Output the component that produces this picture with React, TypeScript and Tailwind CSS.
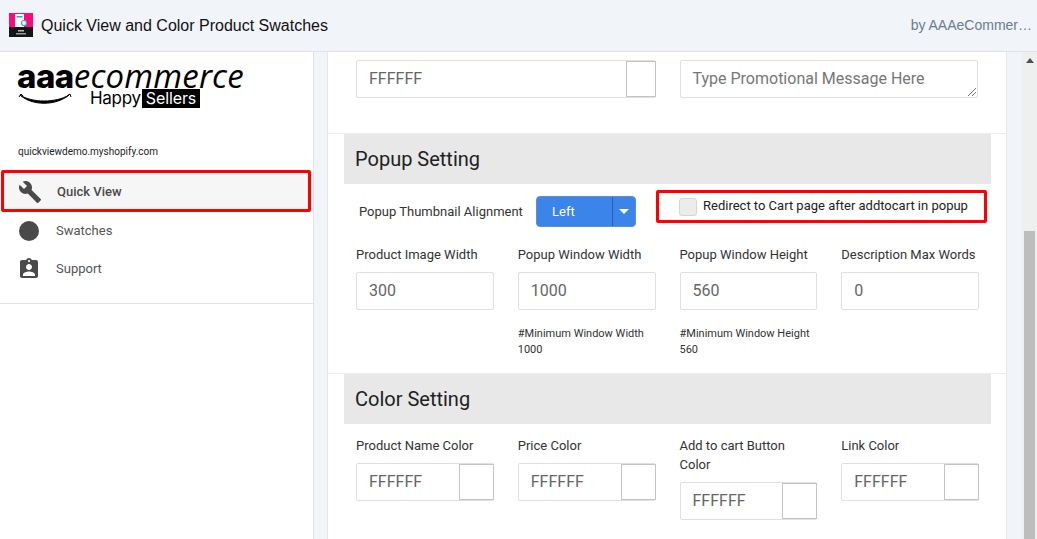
import React from "react";

const roboto = "font-['Roboto',sans-serif]";

function Wrench() {
  return (
    <svg width="24" height="24" viewBox="0 0 24 24" className="fill-[#4a4a4a]">
      <path d="M22.7 19l-9.1-9.1c.9-2.3.4-5-1.5-6.9-2-2-5-2.4-7.4-1.3L9 6 6 9 1.6 4.700C.4 7.100.9 10.100 2.900 12.100c1.900 1.900 4.600 2.400 6.900 1.500l9.100 9.100c.4.400 1 .4 1.400 0l2.300-2.300c.5-.4.5-1.100.1-1.400z" />
    </svg>
  );
}

function Badge() {
  return (
    <svg width="24" height="24" viewBox="0 0 24 24" className="fill-[#4a4a4a]">
      <path d="M19 3h-4.180C14.400 1.840 13.300 1 12 1s-2.400.84-2.820 2H5c-1.100 0-2 .9-2 2v14c0 1.100.9 2 2 2h14c1.100 0 2-.9 2-2V5c0-1.100-.9-2-2-2zm-7 0c.55 0 1 .45 1 1s-.45 1-1 1-1-.45-1-1 .45-1 1-1zm0 4c1.660 0 3 1.340 3 3s-1.340 3-3 3-3-1.340-3-3 1.340-3 3-3zm6 12H6v-1.400c0-2 4-3.100 6-3.100s6 1.100 6 3.100V19z" />
    </svg>
  );
}

function Field({ value }: { value: string }) {
  return (
    <div className="h-[38px] border border-[#e0e0e0] rounded-[2px] bg-white pl-3 flex items-center text-[16px] text-[#666]">
      {value}
    </div>
  );
}

function ColorField({ value = "FFFFFF", wide }: { value?: string; wide?: boolean }) {
  return (
    <div className={`h-[38px] border border-[#e0e0e0] rounded-[2px] bg-white pl-3 flex items-center text-[16px] text-[#666] ${wide ? "w-[300px]" : ""}`}>
      <span className="flex-1">{value}</span>
      <span className={`h-[36px] -mr-px border border-[#c4c4c4] bg-white ${wide ? "w-[30px]" : "w-[35px]"}`} />
    </div>
  );
}

function SectionHead({ title }: { title: string }) {
  return (
    <div className="h-[50px] ml-4 mr-[15px] bg-[#e8e8e8] flex items-center pl-[11px] text-[20px] text-[#212121]">
      {title}
    </div>
  );
}

function Label({ children, className = "" }: { children: React.ReactNode; className?: string }) {
  return <div className={`text-[13px] leading-[19px] text-[#333] ${className}`}>{children}</div>;
}

export default function App() {
  return (
    <div className={`h-[539px] w-[1037px] overflow-hidden bg-[#f1f4f8] flex flex-col ${roboto}`}>
      <header className="h-[52px] shrink-0 bg-[#f1f4f8] border-b border-[#dfe3e8] flex items-center pl-[9px] pr-[5px]">
        <svg width="24" height="24" viewBox="0 0 24 24" className="shrink-0 mb-[2px]">
          <rect width="24" height="24" fill="#ff0a78" />
          <rect y="14" width="24" height="10" fill="#141414" />
          <rect x="6" y="1" width="9" height="13" fill="#fff" />
          <rect x="7.500" y="3" width="6" height="1.500" fill="#27a9e1" />
          <circle cx="15" cy="10" r="2.500" fill="#fff" stroke="#27a9e1" strokeWidth="1.200" />
          <rect x="9" y="17" width="6" height="1.500" fill="#bbb" />
          <rect x="7" y="20" width="10" height="1.500" fill="#999" />
        </svg>
        <span className="ml-[8px] text-[16px] text-[#111] font-['Liberation_Sans',sans-serif] flex-1">Quick View and Color Product Swatches</span>
        <span className="text-[14px] text-[#6b7c93] font-['Liberation_Sans',sans-serif]">by AAAeCommer…</span>
      </header>

      <div className="flex flex-1 min-h-0">
        <aside className="w-[314px] shrink-0 bg-white border-r border-[#dfe3e8] h-full">
          <div className="h-[252px] border-b border-[#e3e3e3]">
            <div className="pl-[17px] pt-[10px] h-[73px]">
              <div className="flex items-baseline leading-[27px] text-black font-['Inter',sans-serif] h-[27px]">
                <span className="text-[33px] font-extrabold tracking-[-0.5px]">aaa</span>
                <span className="text-[33px] italic font-['Open_Sans',sans-serif] tracking-[0.2px]">ecommerce</span>
              </div>
              <div className="flex items-start h-[19px]">
                <svg width="54" height="12" viewBox="0 0 54 12" className="ml-[1px] mt-[4px]">
                  <path d="M2 2 C 14 10, 38 10, 51 2 C 38 13, 14 13, 2 2Z" fill="#000" stroke="#000" strokeWidth="1" />
                  <path d="M1 4 L3 1 L5 3 M49 3 L52 1 L53 4" fill="none" stroke="#000" strokeWidth="1" />
                </svg>
                <span className="ml-[18px] text-[17px] leading-[19px] text-black font-['Inter',sans-serif] tracking-[-0.3px]">Happy</span>
                <span className="ml-[1px] bg-black text-white text-[16px] leading-[19px] px-[4px] font-['Inter',sans-serif] tracking-[-0.1px]">Sellers</span>
              </div>
            </div>
            <div className="pl-[18px] pt-[20px] text-[10px] leading-[13px] text-[#222]">quickviewdemo.myshopify.com</div>
            <nav className="mt-[12px] text-[13px] text-[#555]">
              <div className="ml-[1px] w-[310px] h-[42px] pt-[2px] border-[3px] border-[#f00] rounded-[2px] bg-[#f6f6f6] flex items-center pl-[14px] font-medium text-[#4a4a4a]">
                <Wrench />
                <span className="ml-[15px]">Quick View</span>
              </div>
              <div className="h-[38px] flex items-center pl-[19px]">
                <span className="w-[20px] h-[20px] rounded-full bg-[#4a4a4a]" />
                <span className="ml-[17px]">Swatches</span>
              </div>
              <div className="h-[38px] flex items-center pl-[17px]">
                <Badge />
                <span className="ml-[15px]">Support</span>
              </div>
            </nav>
          </div>
        </aside>

        <main className="w-[680px] ml-[13px] shrink-0 bg-white border-l border-r border-[#e6e8eb] h-full overflow-hidden">
          <div className="h-[82px] border-b border-[#ececec] px-[28px] pt-[8px] flex gap-[24px]">
            <ColorField wide />
            <div className="w-[299px] h-[38px] border border-[#e0e0e0] rounded-[2px] pl-3 flex items-center text-[16px] text-[#777] relative">
              Type Promotional Message Here
              <svg width="8" height="8" viewBox="0 0 8 8" className="absolute right-[1px] bottom-[1px]">
                <path d="M0 8 L8 0 M4 8 L8 4" stroke="#777" strokeWidth="1" />
              </svg>
            </div>
          </div>

          <section className="h-[240px] border-b border-[#ececec]">
            <SectionHead title="Popup Setting" />
            <div className="h-[88px] relative">
              <div className="flex items-center pl-[31px] pt-[12px]">
                <span className="text-[13px] text-[#333] w-[177px]">Popup Thumbnail Alignment</span>
                <div className="w-[100px] h-[31px] rounded-[4px] bg-[#3a84ea] text-white text-[13px] flex border border-[#5f8fd0]">
                  <span className="w-[75px] flex items-center pl-[15px]">Left</span>
                  <span className="flex-1 border-l border-[#2b5fa8] flex items-center justify-center">
                    <span className="w-0 h-0 border-l-[5px] border-r-[5px] border-t-[5px] border-l-transparent border-r-transparent border-t-white" />
                  </span>
                </div>
              </div>
              <div className="absolute left-[328px] top-[6px] w-[331px] h-[33px] border-[3px] border-[#f00] rounded-[2px] flex items-center pl-[20px]">
                <span className="w-[18px] h-[18px] bg-[#ececec] border border-[#d4d4d4] rounded-[3px]" />
                <span className="ml-[6px] -mt-[2px] text-[13px] text-[#222] whitespace-nowrap">Redirect to Cart page after addtocart in popup</span>
              </div>
              <div className="absolute left-[28px] top-[61px] w-[623px] grid grid-cols-4 gap-x-[24px]">
                <Label>Product Image Width</Label>
                <Label>Popup Window Width</Label>
                <Label>Popup Window Height</Label>
                <Label>Description Max Words</Label>
              </div>
            </div>
            <div className="px-[28px] grid grid-cols-4 gap-x-[24px] w-[679px]">
              <Field value="300" />
              <Field value="1000" />
              <Field value="560" />
              <Field value="0" />
              <div />
              <div className="text-[11px] leading-[16px] text-[#333] mt-[16px] whitespace-nowrap">#Minimum Window Width<br />1000</div>
              <div className="text-[11px] leading-[16px] text-[#333] mt-[16px] whitespace-nowrap">#Minimum Window Height<br />560</div>
              <div />
            </div>
          </section>

          <section>
            <SectionHead title="Color Setting" />
            <div className="px-[28px] pt-[12px] grid grid-cols-4 gap-x-[24px] w-[679px] items-start">
              <div>
                <Label className="mb-[8px]">Product Name Color</Label>
                <ColorField />
              </div>
              <div>
                <Label className="mb-[8px]">Price Color</Label>
                <ColorField />
              </div>
              <div>
                <Label className="mb-[8px]">Add to cart Button Color</Label>
                <ColorField />
              </div>
              <div>
                <Label className="mb-[8px]">Link Color</Label>
                <ColorField />
              </div>
            </div>
          </section>
        </main>

        <div className="w-[15px] ml-auto shrink-0 bg-[#eef0ef] flex flex-col items-center pt-[6px]">
          <span className="w-0 h-0 border-l-[4px] border-r-[4px] border-b-[5px] border-l-transparent border-r-transparent border-b-[#505050]" />
          <span className="mt-[168px] w-[11px] flex-1 bg-[#bcbdbc]" />
        </div>
      </div>
    </div>
  );
}
